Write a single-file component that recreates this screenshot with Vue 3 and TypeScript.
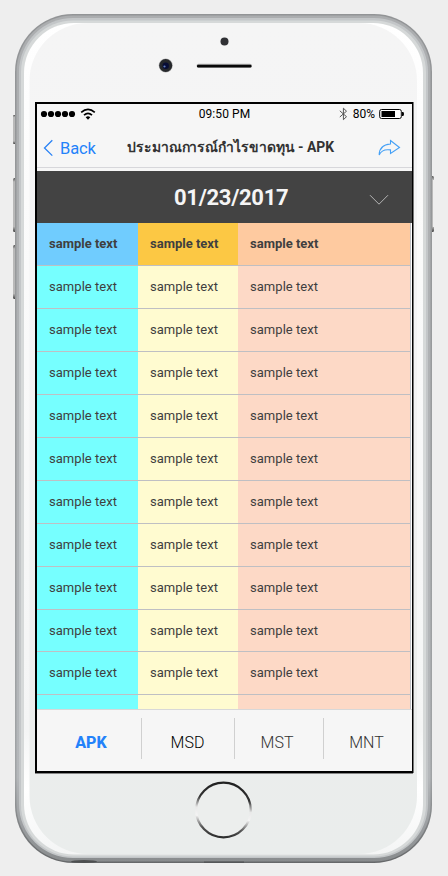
<script setup lang="ts">
interface Tab {
  label: string
  state: string
}

const rows: string[][] = Array.from({ length: 11 }, () => ['sample text', 'sample text', 'sample text'])
const tabs: Tab[] = [
  { label: 'APK', state: 'active' },
  { label: 'MSD', state: 'strong' },
  { label: 'MST', state: '' },
  { label: 'MNT', state: '' },
]
const signal = [44, 51, 58, 65, 72]
</script>

<template>
  <main class="stage">
    <svg class="shell" width="448" height="876" viewBox="0 0 448 876">
      <defs>
        <linearGradient id="edge" x1="0" y1="0" x2="0" y2="1">
          <stop offset="0" stop-color="#929496" /><stop offset=".9" stop-color="#a0a3a5" /><stop offset="1" stop-color="#66686a" />
        </linearGradient>
        <linearGradient id="metal" x1="0" y1="0" x2="0" y2="1">
          <stop offset="0" stop-color="#abadaf" /><stop offset=".9" stop-color="#b4b7ba" /><stop offset="1" stop-color="#898c8e" />
        </linearGradient>
        <linearGradient id="face" x1="0" y1="0" x2="0" y2="1">
          <stop offset="0" stop-color="#f5f5f5" /><stop offset=".35" stop-color="#f4f4f5" /><stop offset=".85" stop-color="#ebedec" /><stop offset="1" stop-color="#eaedec" />
        </linearGradient>
        <linearGradient id="gloss" x1="0" y1="0" x2="0" y2="1">
          <stop offset="0" stop-color="#fff" /><stop offset=".2" stop-color="#fbfbfb" /><stop offset=".85" stop-color="#f4f5f5" /><stop offset=".92" stop-color="#fff" /><stop offset="1" stop-color="#f4f5f5" />
        </linearGradient>
        <linearGradient id="ring" x1=".1" y1="0" x2="0" y2="1">
          <stop offset="0" stop-color="#222" /><stop offset=".25" stop-color="#333" /><stop offset=".45" stop-color="#e8e8e8" />
          <stop offset=".6" stop-color="#f4f4f4" /><stop offset=".8" stop-color="#555" /><stop offset="1" stop-color="#222" />
        </linearGradient>
        <linearGradient id="key" x1="0" y1="0" x2="0" y2="1">
          <stop offset="0" stop-color="#555" /><stop offset=".07" stop-color="#b9b9b9" /><stop offset=".9" stop-color="#b9b9b9" /><stop offset="1" stop-color="#444" />
        </linearGradient>
      </defs>
      <rect x="13" y="115" width="4" height="29" rx="1" fill="url(#key)" />
      <rect x="13" y="178" width="4" height="54" rx="1.5" fill="url(#key)" />
      <rect x="13" y="245" width="4" height="54" rx="1.5" fill="url(#key)" />
      <rect x="430" y="176" width="4" height="56" rx="1.5" fill="url(#key)" />
      <rect x="433" y="180" width="1" height="47" fill="#eee" />
      <rect x="15" y="14" width="417" height="849" rx="58" fill="url(#edge)" />
      <rect x="16.500" y="15.500" width="414" height="846" rx="56.500" fill="url(#metal)" />
      <rect x="19" y="18" width="409" height="840" rx="54" fill="#c3c6c8" />
      <rect x="21" y="20.500" width="405" height="836" rx="52" fill="#d6d9d9" />
      <rect x="24" y="23" width="399" height="831.500" rx="50" fill="url(#gloss)" />
      <rect x="29.500" y="23" width="387.500" height="831" rx="58" fill="url(#face)" />
      <ellipse cx="84" cy="861.500" rx="13" ry="1.500" fill="#4d4f50" />
      <rect x="204" y="861.500" width="40" height="1.500" fill="#555759" />
      <circle cx="224.500" cy="41.500" r="4" fill="#303134" />
      <circle cx="165.700" cy="65.500" r="7" fill="#b0b0b0" />
      <circle cx="165.700" cy="65.500" r="6.500" fill="#26282b" />
      <circle cx="165.700" cy="65.700" r="3.200" fill="#080d35" />
      <circle cx="164.500" cy="66.500" r="1.100" fill="#607ebc" />
      <rect x="196.500" y="63.800" width="55.500" height="4" rx="2" fill="#b5b5b5" />
      <rect x="197" y="64.800" width="54.500" height="2.600" rx="1.200" fill="#080808" />
      <circle cx="223.500" cy="810" r="27.300" fill="#eceeed" stroke="url(#ring)" stroke-width="2.300" />
    </svg>

    <section class="screen">
      <header class="status">
        <svg width="72" height="20" viewBox="37 104 72 20">
          <circle v-for="x in signal" :key="x" :cx="x" cy="114" r="3.100" />
          <g fill="none" stroke="#000" stroke-width="1.700">
            <path d="M81.200 112.300Q88 106.500 94.800 112.300" />
            <path d="M84 115.100Q88 111.600 92 115.100" />
          </g>
          <path d="M85.700 117.200Q88 115.300 90.300 117.200L88 119.700Z" />
        </svg>
        <span class="clock">09:50 PM</span>
        <span class="power">
          <svg width="9" height="14" viewBox="0 0 9 14" fill="none" stroke="#555" stroke-width="1">
            <path d="M.8 3.800 7.500 9.700 4.400 12.700V1.200L7.500 4.200.8 10" />
          </svg>
          <b>80%</b>
          <svg width="25" height="12" viewBox="0 0 25 12">
            <rect x=".7" y="1.500" width="21.600" height="9" rx="1.800" fill="#fff" stroke="#000" />
            <path d="M2.500 3H16v6H2.500zM23 4h1q1 0 1 2t-1 2h-1z" />
          </svg>
        </span>
      </header>

      <nav class="bar">
        <a class="back">
          <svg width="11" height="18" viewBox="0 0 11 18" fill="none" stroke="#2a82f5" stroke-width="1.300"><path d="M9.300 1.300 1.500 9l7.800 7.600" /></svg>
          <span>Back</span>
        </a>
        <svg class="title" width="208" height="28" viewBox="0 0 208 28">
          <text x="0" y="17.500" textLength="167.500" lengthAdjust="spacingAndGlyphs">ประมาณการณ์กำไรขาดทุน</text>
          <text x="167.500" y="17.500" textLength="39.500" lengthAdjust="spacingAndGlyphs" xml:space="preserve"> - APK</text>
        </svg>
        <svg class="share" width="23" height="18" viewBox="0 0 23 18" fill="none" stroke="#45a1f6" stroke-width="1.100">
          <path d="M12.500 1.500 21.500 8.500 12.500 14.500V10.900Q3.800 9.700 1.200 16 1.200 5.800 12.500 5Z" />
        </svg>
      </nav>

      <div class="date">
        <h1>01/23/2017</h1>
        <svg width="20" height="12" viewBox="0 0 20 12" fill="none" stroke="#b5b5b5" stroke-width="1"><path d="M1 1.200 10 10.200 19 1.200" /></svg>
      </div>

      <div class="sheet">
        <div class="row head"><span>sample text</span><span>sample text</span><span>sample text</span></div>
        <div v-for="(row, r) in rows" :key="r" class="row" :class="{ short: r === 8, tail: r === 10 }">
          <template v-if="r < 10"><span v-for="(cell, c) in row" :key="c">{{ cell }}</span></template>
          <template v-else><span></span><span></span><span></span></template>
        </div>
      </div>

      <footer class="tabs">
        <a v-for="tab in tabs" :key="tab.label" :class="tab.state"><span>{{ tab.label }}</span></a>
      </footer>
    </section>
  </main>
</template>

<style>
body {
  background: #eeeeee;
  overflow: hidden;
}
</style>

<style scoped>
.stage {
  position: relative;
  box-sizing: border-box;
  width: 448px;
  height: 876px;
  padding: 102px 0 0 35px;
  background: #eee;
  font-family: Roboto, "Noto Sans", sans-serif;
}
.shell {
  position: absolute;
  inset: 0;
}
svg {
  display: block;
  flex: none;
}
.screen {
  position: relative;
  display: flex;
  flex-direction: column;
  box-sizing: border-box;
  width: 378px;
  height: 671px;
  border: 2px solid #000;
  border-right-width: 1px;
  box-shadow: 0 1px 0 #858585, 1px 0 0 #777;
  background: #f6f6f6;
}
.status {
  display: grid;
  grid-template-columns: 1fr auto 1fr;
  align-items: center;
  height: 20px;
  font-size: 12px;
}
.clock {
  letter-spacing: .1px;
}
.power {
  display: flex;
  align-items: center;
  justify-content: flex-end;
  padding-right: 8px;
}
.power b {
  margin: 0 4px 0 5px;
  font-weight: 400;
}
.bar {
  display: flex;
  align-items: center;
  box-sizing: border-box;
  height: 44px;
  padding: 4px 0 0 6px;
  border-bottom: 1px solid #d7d7db;
}
.back {
  display: flex;
  align-items: center;
  gap: 6px;
  width: 84px;
  color: #2382fa;
  font-size: 16.500px;
  letter-spacing: -.15px;
}
.back span {
  padding-top: 2px;
}
.title {
  overflow: visible;
  font-size: 14px;
  font-weight: 700;
  fill: #333;
}
.share {
  margin-left: 43px;
}
.date {
  display: flex;
  align-items: center;
  box-sizing: border-box;
  height: 52px;
  margin-top: 3px;
  padding-left: 137px;
  background: #434343;
  color: #f5f5f5;
}
.date h1 {
  width: 195px;
  margin: 0;
  font-size: 22px;
  font-weight: 700;
  letter-spacing: -.3px;
}
.date svg {
  margin-top: 6px;
}
.sheet {
  height: 486px;
  box-sizing: border-box;
  overflow: hidden;
  background: #fff;
}
.row {
  display: grid;
  grid-template-columns: 101px 100px 172px;
  box-sizing: border-box;
  width: 374px;
  height: 43px;
  border-right: 1px solid #bfbfc3;
  border-bottom: 1px solid #bfbfc3;
  color: #3f3f3f;
  font-size: 13px;
  line-height: 42px;
}
.row:not(.head) span {
  letter-spacing: .04px;
}
.row span {
  height: 42px;
  padding-left: 12px;
  background: #76ffff;
}
.row span:nth-child(2) {
  background: #fffbd0;
}
.row span:nth-child(3) {
  background: #fdd9c6;
}
.row.head span {
  background: #70ccfe;
}
.row.head span:nth-child(2) {
  background: #fcc844;
}
.row.head span:nth-child(3) {
  background: #fecaa0;
}
.row.head {
  font-weight: 700;
}
.short,
.short span {
  height: 42px;
}
.row.short span {
  height: 41px;
}
.tabs {
  display: grid;
  grid-template-columns: 105px 93px 89px 1fr;
  align-items: center;
  flex: 1;
  box-sizing: border-box;
  border-top: 1px solid #d8d8d8;
  padding-bottom: 4px;
}
.tabs a {
  display: flex;
  align-items: center;
  justify-content: center;
  box-sizing: border-box;
  height: 41px;
  padding: 8px 4px 0 0;
  border-right: 1px solid #d0d0d0;
  color: #333;
  font-size: 16px;
  font-weight: 300;
}
.tabs a:last-child {
  padding-right: 3px;
  border: 0;
}
.tabs .active {
  padding: 8px 0 0 4px;
  color: #2382fa;
  font-weight: 800;
}
.tabs .strong {
  padding-right: 1px;
  color: #000;
}
</style>
